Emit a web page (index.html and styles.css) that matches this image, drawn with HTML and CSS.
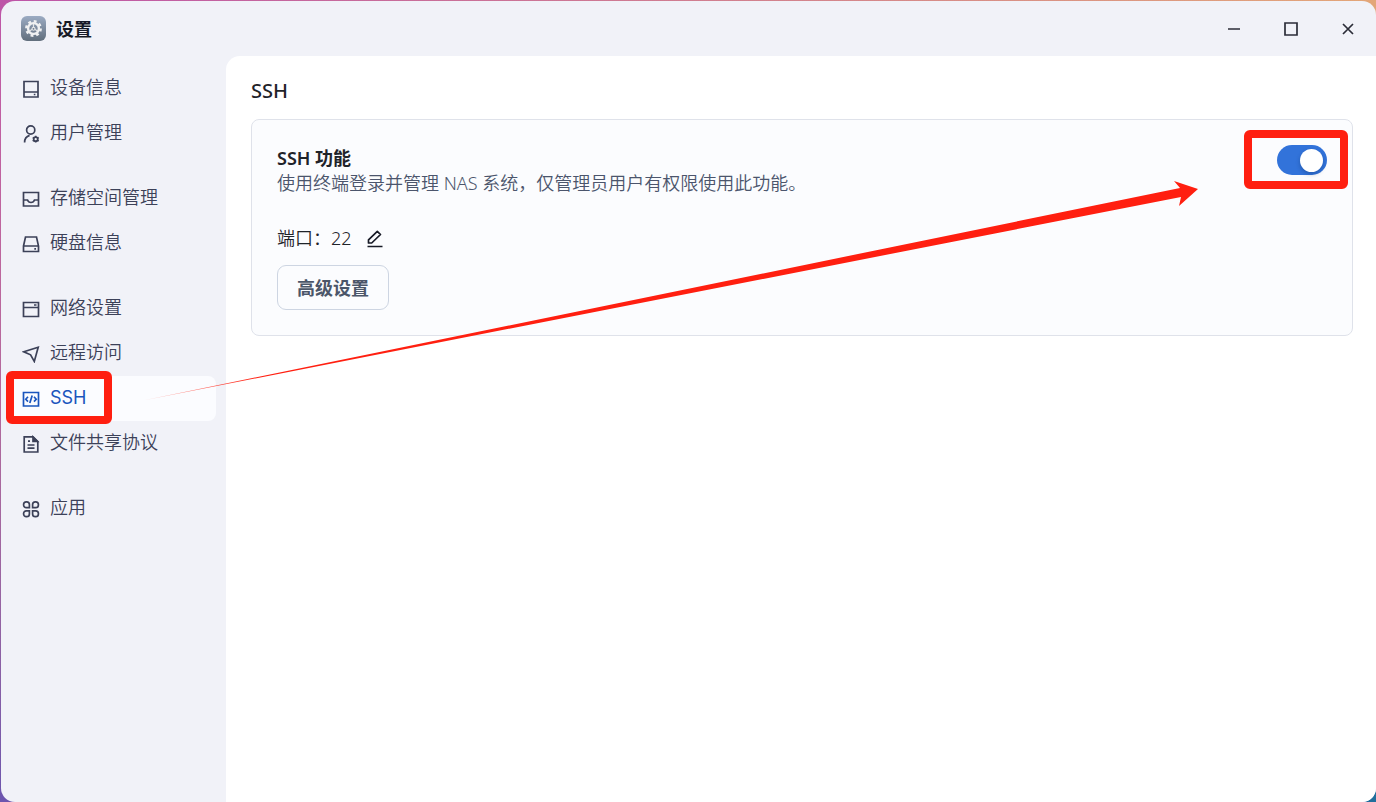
FILE: index.html
```html
<!DOCTYPE html>
<html lang="zh-CN">

<head>
    <meta charset="UTF-8">
    <meta name="viewport" content="width=device-width, initial-scale=1.0">
    <title>设置</title>
    <link rel="stylesheet" href="styles.css">
</head>

<body>
    <div class="window">
        <header class="titlebar">
            <svg class="app-icon" viewBox="0 0 25 25">
                <defs>
                    <linearGradient id="appBg" x1="0" y1="0" x2="0" y2="1">
                        <stop offset="0" stop-color="#9babc3" />
                        <stop offset="1" stop-color="#616e7c" />
                    </linearGradient>
                </defs>
                <rect width="25" height="25" rx="6" fill="url(#appBg)" />
                <circle cx="12.5" cy="12.5" r="7.2" fill="none" stroke="#f0f1f2" stroke-width="2.4" stroke-dasharray="2.83 2.83" />
                <circle cx="12.5" cy="12.5" r="5.4" fill="none" stroke="#f0f1f2" stroke-width="2.4" />
                <path d="M12.5 12.5V8M12.5 12.5l-4 2.6M12.5 12.5l4 2.6" stroke="#e4e6e8" stroke-width="1.2" />
                <circle cx="12.5" cy="12.8" r="2" fill="#e4e6e8" />
                <circle cx="12.5" cy="12.8" r="0.9" fill="#6d7a8a" />
            </svg>
            <h1 class="app-title">设置</h1>
            <div class="window-buttons">
                <button type="button" aria-label="最小化">
                    <svg viewBox="0 0 16 16"><path d="M2 8h12" /></svg>
                </button>
                <button type="button" aria-label="最大化">
                    <svg viewBox="0 0 16 16"><path d="M2 2h12v12H2z" /></svg>
                </button>
                <button type="button" aria-label="关闭">
                    <svg viewBox="0 0 16 16"><path d="M3 3l10 10M13 3L3 13" /></svg>
                </button>
            </div>
        </header>

        <div class="body">
            <nav class="sidebar">
                <div class="nav-group">
                    <a class="nav-item" href="#">
                        <svg viewBox="0 0 18 18"><path d="M2 1.500h14v15.500H2zM2 12h14M11.800 14.500h1.600" /></svg>
                        <span>设备信息</span>
                    </a>
                    <a class="nav-item" href="#">
                        <svg viewBox="0 0 18 18">
                            <circle cx="8.700" cy="5" r="4.100" />
                            <path d="M2.600 17.400c0-3.600 1.800-6 5-7" />
                            <circle cx="13.700" cy="14.200" r="2" />
                            <path d="M13.700 10.800v1.600M13.700 16v1.600M10.700 12.500l1.500.8M15.200 15.100l1.500.8M10.700 15.900l1.500-.8M15.200 13.300l1.500-.8" />
                        </svg>
                        <span>用户管理</span>
                    </a>
                </div>
                <div class="nav-group">
                    <a class="nav-item" href="#">
                        <svg viewBox="0 0 18 18"><path d="M1.500 2.500h15v13.500h-15zM1.500 10h4c.6 1.700 1.800 2.500 3.500 2.500s2.900-.8 3.500-2.500h4" /></svg>
                        <span>存储空间管理</span>
                    </a>
                    <a class="nav-item" href="#">
                        <svg viewBox="0 0 18 18"><path d="M1.500 11L3.500 2h11l2 9v5.500h-15zM1.500 11h15M12.300 13.800h1.700" /></svg>
                        <span>硬盘信息</span>
                    </a>
                </div>
                <div class="nav-group">
                    <a class="nav-item" href="#">
                        <svg viewBox="0 0 18 18"><path d="M1.500 2.500h15V16.500h-15zM1.500 7.500h15M12 5h2.500" /></svg>
                        <span>网络设置</span>
                    </a>
                    <a class="nav-item" href="#">
                        <svg viewBox="0 0 18 18"><path d="M1.800 6.800L16.200 2.200 12.300 16.400 8.600 9.800z" /></svg>
                        <span>远程访问</span>
                    </a>
                    <a class="nav-item active marked" href="#">
                        <svg viewBox="0 0 18 18"><path d="M1.500 2.500h15v13.500h-15zM6 6.800L3.800 9.200 6 11.600M12 6.800l2.200 2.400L12 11.600M10.200 5.500L7.800 13" /></svg>
                        <span>SSH</span>
                    </a>
                    <a class="nav-item" href="#">
                        <svg viewBox="0 0 18 18">
                            <path d="M2.200 1.800h8.800l4.800 4.700V17H2.200zM6 6.200h2M5.500 10h7M5.500 13.200h7" />
                            <path d="M11 2v4.500h4.500z" fill="currentColor" />
                        </svg>
                        <span>文件共享协议</span>
                    </a>
                </div>
                <div class="nav-group">
                    <a class="nav-item" href="#">
                        <svg viewBox="0 0 18 18">
                            <path d="M7.400 7.600H4.300a2.700 2.700 0 0 1-2.700-2.700v-.4a2.700 2.700 0 0 1 2.700-2.700h.4a2.700 2.700 0 0 1 2.700 2.700z" />
                            <path d="M10.600 7.600h3.100a2.700 2.700 0 0 0 2.700-2.700v-.4a2.700 2.700 0 0 0-2.700-2.700h-.4a2.700 2.700 0 0 0-2.700 2.700z" />
                            <path d="M7.400 10.800H4.300a2.700 2.700 0 0 0-2.700 2.700v.4a2.700 2.700 0 0 0 2.700 2.700h.4a2.700 2.700 0 0 0 2.700-2.700z" />
                            <path d="M10.600 10.800h3.100a2.700 2.700 0 0 1 2.700 2.700v.4a2.700 2.700 0 0 1-2.700 2.700h-.4a2.700 2.700 0 0 1-2.700-2.700z" />
                        </svg>
                        <span>应用</span>
                    </a>
                </div>
            </nav>

            <main class="content">
                <h2 class="page-title">SSH</h2>
                <section class="card">
                    <div class="card-head">
                        <div class="card-text">
                            <label class="card-title" for="sshSwitch">SSH 功能</label>
                            <p class="card-desc">使用终端登录并管理 NAS 系统，仅管理员用户有权限使用此功能。</p>
                        </div>
                        <div class="switch-wrap">
                            <input type="checkbox" class="switch" id="sshSwitch" checked>
                        </div>
                    </div>
                    <div class="port">
                        <span>端口：22</span>
                        <button type="button" class="edit" aria-label="编辑端口">
                            <svg viewBox="0 0 18 18"><path d="M1.500 16.500h15M2.500 13V9.800L11.300 1.300l3.200 3.200L5.700 13z" /></svg>
                        </button>
                    </div>
                    <button type="button" class="advanced">高级设置</button>
                </section>
            </main>
        </div>

        <!-- seta do menu até o botão -->
        <svg class="arrow" viewBox="0 0 1376 420" width="1376" height="420">
            <defs>
                <linearGradient id="fade" gradientUnits="userSpaceOnUse" x1="145" y1="0" x2="260" y2="0">
                    <stop offset="0" stop-color="#ff1f10" stop-opacity="0.4" />
                    <stop offset="1" stop-color="#ff1f10" />
                </linearGradient>
            </defs>
            <path fill="url(#fade)" d="M143 400.500L1180 188 1174 181 1198 189 1179 206 1181 197z" />
        </svg>
    </div>
</body>

</html>
```

FILE: styles.css
```css
* {
    box-sizing: border-box;
}

body {
    margin: 0;
    padding: 1px 0 0 1px;
    font-family: "Noto Sans", "Noto Sans CJK SC", sans-serif;
    font-size: 18px;
    line-height: 25px;
    color: #1f2329;
    background: radial-gradient(circle at bottom right, #1f6f9c 0, transparent 300px),
        linear-gradient(to bottom right, #bd55a8, transparent 50%),
        linear-gradient(#e3a678, #6c55ae);
}

h1,
h2,
p {
    margin: 0;
}

button {
    padding: 0;
    border: none;
    background: none;
    font: inherit;
    cursor: pointer;
}

svg {
    flex: none;
    fill: none;
    stroke: currentColor;
}

.window {
    position: relative;
    display: flex;
    flex-direction: column;
    min-height: calc(100vh - 1px);
    border-radius: 14px;
    overflow: hidden;
    background-color: #f1f2f8;
}

/* barra de título */
.titlebar {
    display: flex;
    align-items: center;
    height: 55px;
    padding-left: 20px;
}

.app-icon {
    width: 25px;
    height: 25px;
    margin-right: 10px;
    stroke: none;
}

.app-title {
    padding-top: 2px;
    font-size: 18px;
    font-weight: 700;
    color: #171a26;
}

.window-buttons {
    display: flex;
    height: 100%;
    margin-left: auto;
}

.window-buttons button {
    display: flex;
    align-items: center;
    justify-content: center;
    width: 57px;
    color: #2b2d38;
}

.window-buttons svg {
    width: 16px;
    height: 16px;
    stroke-width: 1.7;
}

.body {
    display: flex;
    flex: 1;
}

/* menu lateral */
.sidebar {
    display: flex;
    flex-direction: column;
    gap: 20px;
    flex: none;
    width: 225px;
    padding: 10px;
}

.nav-item {
    position: relative;
    display: flex;
    align-items: center;
    gap: 10px;
    height: 45px;
    padding: 0 0 2px 11px;
    border-radius: 8px;
    color: #3c4158;
    font-weight: 350;
    text-decoration: none;
}

.nav-item svg {
    width: 18px;
    height: 18px;
    margin-top: 2px;
    stroke-width: 1.7;
}

.nav-item.active {
    background-color: #fbfcff;
    color: #1a55bd;
    font-family: Inter, sans-serif;
    font-weight: 400;
}

/* destaques em vermelho */
.marked::after,
.switch-wrap::after {
    content: "";
    position: absolute;
    box-sizing: border-box;
    border: 8px solid #ff1f10;
    border-radius: 6px;
    pointer-events: none;
}

.marked::after {
    top: -5px;
    left: -5px;
    width: 106px;
    height: 53px;
}

.switch-wrap::after {
    top: -15px;
    right: -21px;
    width: 104px;
    height: 59px;
}

.arrow {
    position: absolute;
    top: -1px;
    left: -1px;
    stroke: none;
    pointer-events: none;
}

/* conteúdo */
.content {
    flex: 1;
    min-width: 0;
    padding: 22px 23px 22px 25px;
    border-top-left-radius: 14px;
    background-color: #fff;
}

.page-title {
    margin-bottom: 16px;
    font-size: 20px;
    font-weight: 500;
}

.card {
    padding: 25px;
    border: 1px solid #dfe2ea;
    border-radius: 8px;
    background-color: #fbfcfe;
}

.card-head {
    display: flex;
    justify-content: space-between;
    margin-bottom: 30px;
}

.card-text {
    padding-top: 1px;
}

.card-title {
    display: block;
    font-weight: 600;
}

.card-desc {
    color: #4b556c;
    font-weight: 350;
}

.switch-wrap {
    position: relative;
    flex: none;
    height: 30px;
}

.switch {
    display: flex;
    align-items: center;
    justify-content: flex-end;
    width: 50px;
    height: 30px;
    margin: 0;
    padding: 4px;
    border-radius: 15px;
    background-color: #3273da;
    appearance: none;
    cursor: pointer;
}

.switch::before {
    content: "";
    width: 23px;
    height: 23px;
    border-radius: 50%;
    background-color: #fff;
    box-shadow: 0 2px 4px rgba(0, 35, 80, 0.3);
}

.switch:not(:checked) {
    justify-content: flex-start;
    background-color: #b8becb;
}

.port {
    display: flex;
    align-items: center;
    gap: 14px;
    margin-bottom: 14px;
    font-weight: 350;
}

.edit {
    display: flex;
    color: #171a26;
}

.edit svg {
    width: 18px;
    height: 18px;
    stroke-width: 1.7;
    stroke-linejoin: round;
}

.advanced {
    display: block;
    width: 112px;
    height: 45px;
    padding-top: 2px;
    border: 1px solid #cdd5e2;
    border-radius: 9px;
    color: #4b5669;
    font-weight: 700;
}
```
